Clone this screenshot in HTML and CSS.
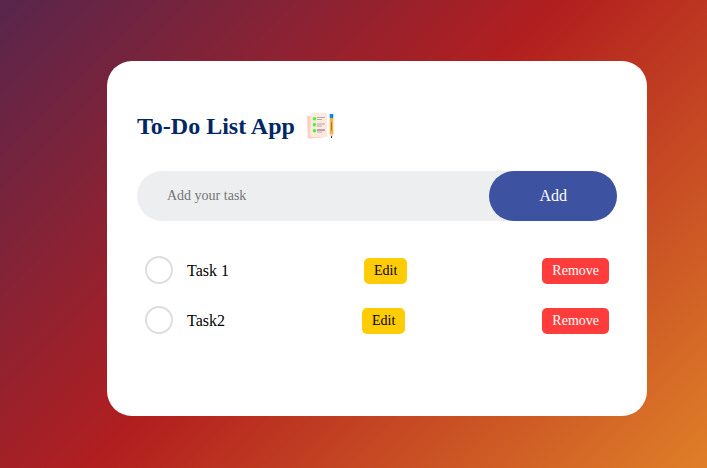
FILE: index.html
```html
<!DOCTYPE html>
<html lang="en">
<head>
  <meta charset="utf-8">
  <meta name="viewport" content="width=device-width, initial-scale=1">
  <title>To-Do List App</title>
  <link rel="stylesheet" href="styles.css">
</head>
<body>
  <main class="todo-app">
    <h2 class="title">To-Do List App
      <svg class="title-icon" viewBox="0 0 30 30" aria-hidden="true">
        <path d="M2 5h16v21.500l-14 1.300q-1.300 0-1.300-1.300z" fill="#ffd0c2"/>
        <path d="M6 3q0-1 1-1h14.500l1.200 1-.7 1v20l.5 1-.5 1H5z" fill="#ffe8dc"/>
        <g fill="#3dfa3d">
          <circle cx="9.500" cy="7.700" r="1.800"/>
          <circle cx="9.500" cy="13.700" r="1.800"/>
          <circle cx="9.500" cy="19.700" r="1.800"/>
        </g>
        <g fill="#b9a5b4">
          <path d="M12 6h8v1h-8zM12 8h5v1h-5zM12 12.500h8v1h-8zM12 14.500h5v1h-5zM12 18h8v2h-8zM12 20.500h5v1h-5z"/>
        </g>
        <path d="M24.700 3h3.600v4h-3.600z" fill="#0b84ff"/>
        <path d="M24.700 7h3.600v16.500h-3.600z" fill="#ffb03b"/>
        <path d="M26 11h1v9h-1z" fill="#b07c35"/>
        <path d="M24.700 23.500h3.600l-1.300 3h-1z" fill="#f5c6c6"/>
        <path d="M26 25.300h1v1.700h-1z" fill="#222"/>
      </svg>
    </h2>
    <form class="row">
      <input class="task-input" type="text" placeholder="Add your task" aria-label="Add your task">
      <button class="add-button" type="button">Add</button>
    </form>
    <ul class="task-list">
      <li class="task">
        <label class="task-label"><input class="task-check" type="checkbox">Task 1</label>
        <button class="task-button edit" type="button">Edit</button>
        <button class="task-button remove" type="button">Remove</button>
      </li>
      <li class="task">
        <label class="task-label"><input class="task-check" type="checkbox">Task2</label>
        <button class="task-button edit" type="button">Edit</button>
        <button class="task-button remove" type="button">Remove</button>
      </li>
    </ul>
  </main>
</body>
</html>
```
FILE: styles.css
```css
* {
  box-sizing: border-box;
  margin: 0;
  padding: 0;
  font-family: "Liberation Serif", "Times New Roman", serif;
}

body {
  min-height: 100vh;
  padding: 61px 60px 52px 107px;
  background: linear-gradient(135deg, #58264d, #b21f1f 48%, #df7f28);
}

.todo-app {
  max-width: 540px;
  padding: 50px 30px 70px;
  border-radius: 25px;
  background: #fff;
}

.title {
  display: flex;
  align-items: center;
  gap: 10px;
  margin-bottom: 30px;
  color: #002765;
  font-size: 24px;
  line-height: 30px;
}

.title-icon {
  width: 30px;
  height: 30px;
}

.row {
  display: flex;
  margin-bottom: 25px;
  border-radius: 30px;
  background: #edeef0;
}

.task-input {
  flex: 1;
  min-width: 0;
  padding: 0 30px;
  border: 0;
  outline: 0;
  background: transparent;
  font-size: 14px;
}

.task-input::placeholder {
  color: #757575;
}

.add-button {
  height: 50px;
  padding: 0 50px;
  border: 0;
  border-radius: 40px;
  background: #3d52a0;
  color: #fff;
  font-size: 16px;
}

.task-list {
  list-style: none;
}

.task {
  display: flex;
  align-items: center;
  justify-content: space-between;
  padding: 10px 8px;
}

.task-label {
  display: flex;
  align-items: flex-start;
  gap: 14px;
  font-size: 16px;
  line-height: 30px;
}

.task-check {
  width: 28px;
  height: 28px;
  border: 2px solid #dedede;
  border-radius: 50%;
  appearance: none;
}

.task-check:checked {
  background: #3d52a0;
}

.task-button {
  padding: 5px 10px;
  border: 0;
  border-radius: 5px;
  font-size: 14px;
  line-height: 16px;
}

.edit {
  background: #ffcc05;
  color: #000;
}

.remove {
  background: #ff3c3c;
  color: #fff;
}
```
